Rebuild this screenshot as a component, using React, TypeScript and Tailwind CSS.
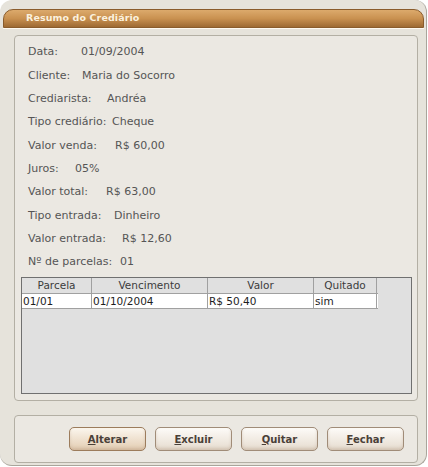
import React from "react";

const rows: { label: string; value: string; w: string }[] = [
  { label: "Data:", value: "01/09/2004", w: "w-[53px]" },
  { label: "Cliente:", value: "Maria do Socorro", w: "w-[54px]" },
  { label: "Crediarista:", value: "Andréa", w: "w-[79px]" },
  { label: "Tipo crediário:", value: "Cheque", w: "w-[84px]" },
  { label: "Valor venda:", value: "R$ 60,00", w: "w-[87px]" },
  { label: "Juros:", value: "05%", w: "w-[47px]" },
  { label: "Valor total:", value: "R$ 63,00", w: "w-[78px]" },
  { label: "Tipo entrada:", value: "Dinheiro", w: "w-[86px]" },
  { label: "Valor entrada:", value: "R$ 12,60", w: "w-[94px]" },
  { label: "Nº de parcelas:", value: "01", w: "w-[92px]" },
];

function Btn({ first, rest, primary }: { first: string; rest: string; primary?: boolean }) {
  return (
    <button
      className={
        "w-[77px] h-[24px] rounded-[5px] border text-[10px] font-bold text-[#4a4038] shadow-[inset_0_-2px_3px_rgba(150,120,90,0.25)] " +
        (primary
          ? "border-[#9c7c5c] bg-gradient-to-b from-[#fbf6ee] to-[#e3cdb2]"
          : "border-[#a08c78] bg-gradient-to-b from-[#fdfbf8] to-[#e6dccf]")
      }
      style={{ fontFamily: '"DejaVu Sans", Verdana, sans-serif' }}
    >
      <span className="underline underline-offset-[1px]">{first}</span>
      {rest}
    </button>
  );
}

export default function App() {
  return (
    <div className="w-[428px] h-[467px] bg-white" style={{ fontFamily: '"DejaVu Sans", Verdana, sans-serif' }}>
      <div className="w-[427px] h-[466px] bg-[#e6e3db] rounded-[12px] border-r border-b border-[#a9a59b] pt-[9px] pl-[3px] pr-[2px]">
        <div className="w-[421px] h-[19px] rounded-t-[10px] border border-[#8a5c2c] bg-gradient-to-b from-[#dcaa6c] via-[#c99150] to-[#9e6a33] flex items-center pl-[22px] shadow-[0_1px_0_#fffaf0]">
          <span className="text-[9.5px] font-bold text-[#fbf1de] tracking-[0.1px]">Resumo do Crediário</span>
        </div>
        <div className="ml-[11px] mt-[7px] w-[404px] h-[366px] rounded-[4px] border border-[#b3afa4] bg-[#ebe8e2] pt-[5px]">
          <div className="pl-[13px]">
            {rows.map((r) => (
              <div key={r.label} className="h-[23.33px] flex items-center text-[11px] text-[#555555]">
                <span className={r.w + " shrink-0"}>{r.label}</span>
                <span>{r.value}</span>
              </div>
            ))}
          </div>
          <div className="ml-[6px] mt-[3px] w-[391px] h-[117px] border border-[#707070] bg-[#e0e0e0] text-[10.5px]">
            <div className="flex h-[16px] border-b border-[#a0a0a0] w-[356px] text-[#3c3c3c]">
              <div className="w-[70px] border-r border-[#a0a0a0] text-center leading-[15px]">Parcela</div>
              <div className="w-[116px] border-r border-[#a0a0a0] text-center leading-[15px]">Vencimento</div>
              <div className="w-[106px] border-r border-[#a0a0a0] text-center leading-[15px]">Valor</div>
              <div className="w-[63px] border-r border-[#a0a0a0] text-center leading-[15px]">Quitado</div>
            </div>
            <div className="flex h-[15px] border-b border-[#a0a0a0] w-[356px] bg-white text-[#1e1e1e]">
              <div className="w-[70px] border-r border-[#a0a0a0] pl-[1px] leading-[14px]">01/01</div>
              <div className="w-[116px] border-r border-[#a0a0a0] pl-[1px] leading-[14px]">01/10/2004</div>
              <div className="w-[106px] border-r border-[#a0a0a0] pl-[1px] leading-[14px]">R$ 50,40</div>
              <div className="w-[63px] border-r border-[#a0a0a0] pl-[1px] leading-[14px]">sim</div>
            </div>
          </div>
        </div>
        <div className="ml-[11px] mt-[14px] w-[404px] h-[48px] rounded-[4px] border border-[#b3afa4] bg-[#ebe8e2] flex items-center pl-[54px] gap-[9px]">
          <Btn first="A" rest="lterar" primary />
          <Btn first="E" rest="xcluir" />
          <Btn first="Q" rest="uitar" />
          <Btn first="F" rest="echar" />
        </div>
      </div>
    </div>
  );
}
